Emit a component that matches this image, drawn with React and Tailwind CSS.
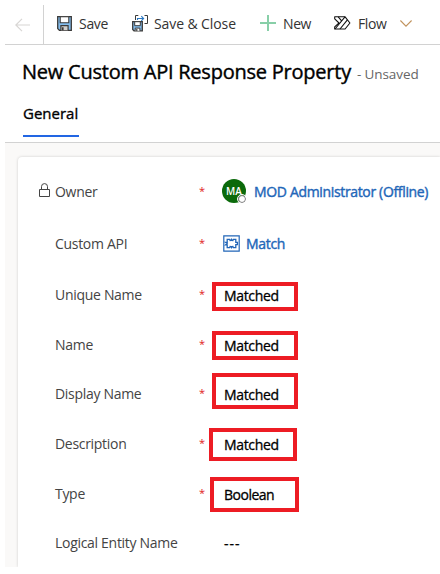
import React from "react";

function BackIcon() {
  return (
    <svg width="15" height="14" viewBox="0 0 15 14" fill="none" stroke="#d8d6d4" strokeWidth="1.2">
      <path d="M7 .8.8 7 7 13.2M.8 7H15" />
    </svg>
  );
}

function SaveIcon() {
  return (
    <svg width="15" height="15" viewBox="0 0 15 15" fill="none">
      <path d="M.7.7h13.6v13.6H2.4L.7 12.6z" fill="#83bcec" stroke="#3b3a39" strokeWidth="1.3" />
      <path d="M3.2.7h8.6v6H3.2z" fill="#fff" stroke="#3b3a39" strokeWidth="1.1" />
      <path d="M3.9 14.3V9.7h7.2v4.6" fill="#d2d0ce" stroke="#3b3a39" strokeWidth="1.2" />
      <path d="M5.8 11.3v3" stroke="#3b3a39" strokeWidth="1.6" />
    </svg>
  );
}

function SaveCloseIcon() {
  return (
    <svg width="16" height="17" viewBox="0 0 16 17" fill="none">
      <path d="M3.5 5V.5h2.8M12.5.5h3v8h-3" stroke="#3b3a39" strokeWidth="1" />
      <path d="M5.5 5V3.5h5.8M9.3 1.2l2.3 2.3-2.3 2.3" stroke="#2b78c2" strokeWidth="1.1" />
      <path d="M.7 6.7h9.6v9.1H2L.7 14.5z" fill="#83bcec" stroke="#3b3a39" strokeWidth="1.3" />
      <path d="M2.7 6.7h5.6v4H2.7z" fill="#fff" stroke="#3b3a39" />
      <path d="M3.2 15.8v-2.7h4.7v2.7" fill="#fff" stroke="#3b3a39" />
      <path d="M4.8 14v2" stroke="#3b3a39" strokeWidth="1.2" />
    </svg>
  );
}

function PlusIcon() {
  return (
    <svg width="16" height="16" viewBox="0 0 16 16" stroke="#88cfa8" strokeWidth="2">
      <path d="M8 0v16M0 8h16" />
    </svg>
  );
}

function FlowIcon() {
  return (
    <svg width="17" height="14" viewBox="0 0 17 14" fill="none" stroke="#111" strokeWidth="1.1" strokeLinejoin="round">
      <path d="M.7.8h10.4L15.9 7l-4.8 6H.7v-2.2L5 7 .7 2.8z" />
      <path d="M4.2.8 7.4 4.6M1 13 11 .9M6 13l7.4-9.2" />
    </svg>
  );
}

function ChevronIcon() {
  return (
    <svg width="12" height="7" viewBox="0 0 12 7" fill="none" stroke="#c0925c" strokeWidth="1.1">
      <path d="m.4.5 5.6 5.6L11.6.5" />
    </svg>
  );
}

function LockIcon() {
  return (
    <svg width="11" height="14" viewBox="0 0 11 14" fill="none" stroke="#444" strokeWidth="1">
      <path d="M.5 6.5h10v7H.5zM2.5 6.5V3.6a3 3 0 0 1 6 0v2.9" />
    </svg>
  );
}

function EntityIcon() {
  return (
    <svg width="17" height="17" viewBox="0 0 17 17" fill="none" stroke="#2266b8" strokeWidth="1.2">
      <path d="M.8.8h15.4v15.4H.8z" />
      <path d="M4.2 4.4h2.5l.4 1.2.9-.2.5-1 .5 1 .9.2.4-1.2h2.5v2.9h1.6v2.4h-1.6v2.9h-2.5l-.4-1.2-.9.2-.5 1-.5-1-.9-.2-.4 1.2H4.2V9.9H2.6l1.5-1.4-1.5-1.2h1.6z" strokeWidth="1.3" />
    </svg>
  );
}

function Avatar() {
  return (
    <span className="relative flex size-6 shrink-0 items-center justify-center rounded-full bg-[#0b6a0b] text-[10px] font-semibold text-white">
      MA
      <span className="absolute right-0 bottom-0 size-[8px] rounded-full border border-[#777] bg-white outline-1 outline-white" />
    </span>
  );
}

function Field({ label, height, value, required = true, frame, tracking = "tracking-[-0.35px]", children }) {
  return (
    <div className={`flex items-center ${height}`}>
      <div className="flex w-[37px] shrink-0 justify-end pr-[5px] pb-[3px]">
        {label === "Owner" && <LockIcon />}
      </div>
      <div className="w-36 shrink-0 text-[14px] tracking-[-0.3px] text-[#444]">{label}</div>
      <div className="w-6 shrink-0 text-[11px] text-[#e02020]">{required ? "*" : ""}</div>
      <div className="relative flex h-full items-center">
        {frame && <span className={`absolute border-4 border-[#ed1c24] ${frame}`} />}
        {children || <span className={`relative top-px left-px text-[14px] text-black [-webkit-text-stroke:0.3px_black] ${tracking}`}>{value}</span>}
      </div>
    </div>
  );
}

export default function App() {
  return (
    <div className="h-[574px] w-[440px] overflow-hidden bg-white pl-[5px] font-['Open_Sans','Noto_Sans',sans-serif] whitespace-nowrap">
      <div className="flex h-[45px] border-b border-[#d2d2d2] pt-[5px] text-[14px] text-[#333]">
        <div className="flex w-[39px] items-center border-r border-[#d2d2d2] pl-[10px]">
          <BackIcon />
        </div>
        <div className="flex items-center pb-[3px]">
          <div className="flex w-[75px] items-center gap-[7px] pl-[13px]">
            <SaveIcon />
            <span className="tracking-[-0.3px]">Save</span>
          </div>
          <div className="flex w-[128px] items-center gap-[6px] pl-[13px]">
            <SaveCloseIcon />
            <span className="tracking-[-0.1px]">Save & Close</span>
          </div>
          <div className="flex w-[74px] items-center gap-[7px] pl-[13px]">
            <PlusIcon />
            <span className="tracking-[-0.4px]">New</span>
          </div>
          <div className="flex items-center gap-[7px] pl-[13px]">
            <FlowIcon />
            <span className="tracking-[-0.4px]">Flow</span>
            <span className="pl-[7px]"><ChevronIcon /></span>
          </div>
        </div>
      </div>

      <div className="h-[98px] border-b border-[#d2d2d2] pl-[17px]">
        <div className="flex h-[41px] items-baseline gap-[6px] pt-[13px]">
          <h1 className="text-[20px] leading-7 tracking-[-0.23px] text-black [-webkit-text-stroke:0.4px_black]">New Custom API Response Property</h1>
          <span className="text-[13.5px] leading-5 tracking-[-0.1px] text-[#666]">- Unsaved</span>
        </div>
        <div className="mt-[17px] ml-px h-[34px] w-14 border-b-2 border-[#2266e3] text-[15px] leading-5 text-black [-webkit-text-stroke:0.35px_black]">General</div>
      </div>

      <div className="h-[424px] bg-[#faf9f8] pt-[14px] pl-[13px]">
        <div className="h-[410px] rounded-tl-sm bg-white pt-2 shadow-[0_0_3px_rgba(0,0,0,0.18)]">
          <Field label="Owner" height="h-[52px]">
            <div className="-ml-px flex items-center gap-[8px]">
              <Avatar />
              <span className="text-[14px] tracking-[-0.34px] text-[#2266b8] [-webkit-text-stroke:0.4px_#2266b8]">MOD Administrator (Offline)</span>
            </div>
          </Field>
          <Field label="Custom API" height="h-[52px]">
            <div className="flex items-center gap-[6px]">
              <EntityIcon />
              <span className="text-[14px] tracking-[-0.3px] text-[#2266b8] [-webkit-text-stroke:0.4px_#2266b8]">Match</span>
            </div>
          </Field>
          <Field label="Unique Name" height="h-[50px]" value="Matched" frame="top-[13px] -left-[11px] h-[29px] w-[86px]" />
          <Field label="Name" height="h-[50px]" value="Matched" frame="top-[12px] -left-[11px] h-[29px] w-[86px]" />
          <Field label="Display Name" height="h-[49px]" value="Matched" frame="top-[4px] -left-[11px] h-[36px] w-[86px]" />
          <Field label="Description" height="h-[50px]" value="Matched" frame="top-[10px] -left-[14px] h-[33px] w-[88px]" />
          <Field label="Type" height="h-[50px]" value="Boolean" tracking="tracking-[-0.5px]" frame="top-[9px] -left-[13px] h-[35px] w-[89px]" />
          <Field label="Logical Entity Name" height="h-[49px]" value="---" tracking="tracking-[1px]" required={false} />
        </div>
      </div>
      <div className="relative -ml-[5px] h-[7px] bg-white" />
    </div>
  );
}
